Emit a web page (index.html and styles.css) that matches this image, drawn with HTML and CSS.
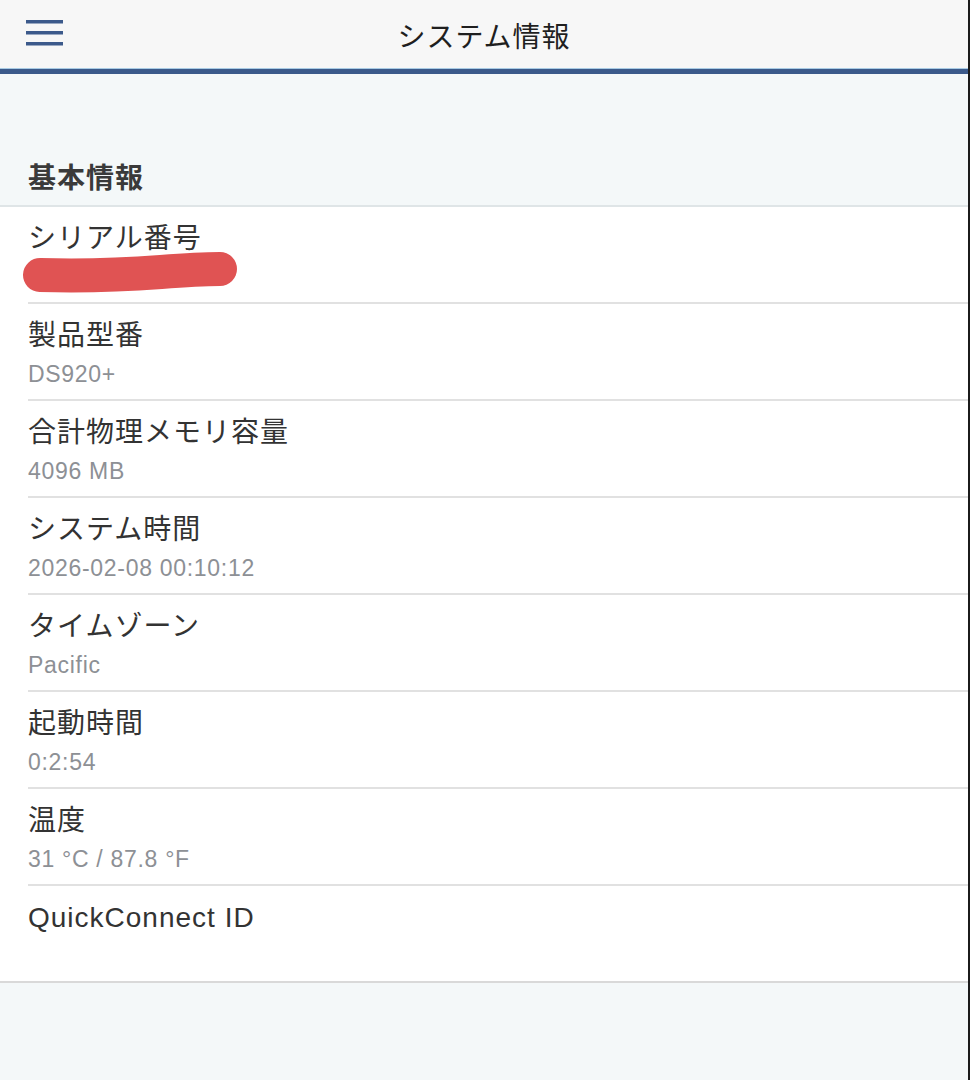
FILE: index.html
```html
<!DOCTYPE html>
<html lang="ja">
<head>
<meta charset="utf-8">
<title>システム情報</title>
<link rel="stylesheet" href="styles.css">
</head>
<body>
<div class="app">
  <header class="topbar">
    <button class="menu" aria-label="menu">
      <svg width="38" height="28" viewBox="0 0 38 28">
        <rect x="0" y="2" width="37" height="3.5" fill="#3c5a8b"/>
        <rect x="0" y="13" width="37" height="3.5" fill="#3c5a8b"/>
        <rect x="0" y="24" width="37" height="3.5" fill="#3c5a8b"/>
      </svg>
    </button>
    <h1 class="title">システム情報</h1>
    <div class="spacer"></div>
  </header>
  <div class="accent"></div>
  <main class="content">
    <h2 class="section-title">基本情報</h2>
    <ul class="list">
      <li class="item">
        <div class="label">シリアル番号</div>
        <div class="value">
          <svg class="redact" width="230" height="44" viewBox="0 0 230 44">
            <path d="M19 24 C 55 25, 100 24, 140 21 C 165 19, 185 18, 199 18" stroke="#e05353" stroke-width="34" stroke-linecap="round" fill="none"/>
          </svg>
        </div>
      </li>
      <li class="item">
        <div class="label">製品型番</div>
        <div class="value">DS920+</div>
      </li>
      <li class="item">
        <div class="label">合計物理メモリ容量</div>
        <div class="value">4096 MB</div>
      </li>
      <li class="item">
        <div class="label">システム時間</div>
        <div class="value">2026-02-08 00:10:12</div>
      </li>
      <li class="item">
        <div class="label">タイムゾーン</div>
        <div class="value">Pacific</div>
      </li>
      <li class="item">
        <div class="label">起動時間</div>
        <div class="value">0:2:54</div>
      </li>
      <li class="item">
        <div class="label">温度</div>
        <div class="value">31 °C / 87.8 °F</div>
      </li>
      <li class="item last">
        <div class="label">QuickConnect ID</div>
        <div class="value"></div>
      </li>
    </ul>
  </main>
</div>
</body>
</html>
```

FILE: styles.css
```css
html {
  background: #1b1b1b;
}
body {
  margin: 0;
  font-family: "Liberation Sans", "Noto Sans CJK JP", sans-serif;
}
.app {
  width: 968px;
  min-height: 1080px;
  background: #f4f8f9;
}
.topbar {
  height: 68px;
  background: #f7f7f7;
  display: grid;
  grid-template-columns: 1fr auto 1fr;
  align-items: center;
}
.menu {
  justify-self: start;
  margin-left: 26px;
  padding: 0;
  border: 0;
  background: none;
  display: flex;
  margin-top: -4px;
}
.title {
  margin: 0;
  font-size: 28px;
  font-weight: 400;
  letter-spacing: 1px;
  color: #1f1f1f;
  line-height: 34px;
  margin-top: 7px;
}
.accent {
  height: 6px;
  background: #3b5a8b;
  border-top: 1px solid #a9cbe4;
  box-sizing: border-box;
}
.content {
  display: flex;
  flex-direction: column;
}
.section-title {
  margin: 0;
  padding: 88px 0 9px 28px;
  font-size: 28px;
  line-height: 34px;
  font-weight: 700;
  letter-spacing: 1px;
  color: #3a3a3a;
  border-bottom: 2px solid #dfe5e7;
}
.list {
  list-style: none;
  margin: 0;
  padding: 0;
  background: #ffffff;
  border-bottom: 2px solid #d9d9d9;
}
.item {
  margin-left: 28px;
  padding: 15px 0 8px 0;
  border-bottom: 2px solid #e1e1e1;
}
.item.last {
  border-bottom: 0;
}
.label {
  font-size: 28px;
  line-height: 34px;
  letter-spacing: 1px;
  color: #333333;
}
.value {
  display: flow-root;
  height: 34px;
  margin-top: 4px;
  font-size: 23px;
  line-height: 34px;
  letter-spacing: 0.7px;
  color: #8d9095;
}
.redact {
  display: block;
  margin: -9px 0 0 -7px;
}
```
